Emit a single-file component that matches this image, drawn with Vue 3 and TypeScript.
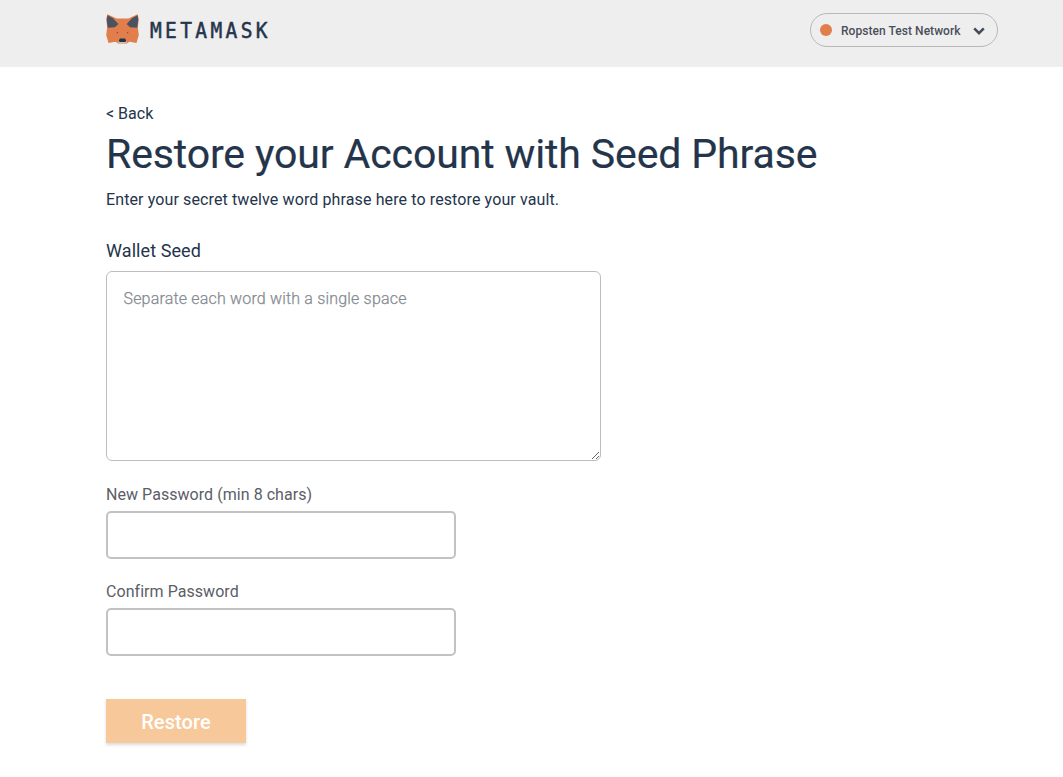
<script setup lang="ts">
import { ref } from 'vue'

const network = ref<string>('Ropsten Test Network')
const seed = ref<string>('')
const password = ref<string>('')
const confirmation = ref<string>('')
</script>

<template>
  <div class="page">
    <header class="header">
      <div class="brand">
        <svg class="fox" viewBox="0 0 33 31" width="33" height="31" aria-hidden="true">
          <path fill="#e27d4c" d="M1.4 .3 10.5 4.6H22.5L31.6 .3 32.8 5 31.8 13.5 32.8 21 30.5 29 23.5 27.8 20 30H13L9.5 27.8 2.5 29 .2 21 1.2 13.5 .2 5Z" />
          <path fill="#4a5361" d="M1.5 1.3 7 4.2 12.4 10 9 13.2 1.8 13.8 .8 6ZM31.5 1.3 26 4.2 20.6 10 24 13.2 31.2 13.8 32.2 6Z" />
          <path fill="#d9b9a2" d="M12.5 26.4H20.5L20.8 30H12.2Z" />
          <path fill="#24344b" d="M14 24.6H19L20.2 26.5 19.5 28H13.5L12.8 26.5Z" />
          <path fill="#684c43" d="M10.3 17.8 12.2 18.2 11.5 19.6ZM22.7 17.8 20.8 18.2 21.5 19.6Z" />
        </svg>
        <span class="wordmark">METAMASK</span>
      </div>
      <button class="network" type="button">
        <span class="dot"></span>
        <span class="network-name">{{ network }}</span>
        <svg class="chevron" viewBox="0 0 12 8" width="12" height="8" aria-hidden="true">
          <path d="M1.2 1.4 6 6.1 10.8 1.4" fill="none" stroke="#444c59" stroke-width="2.6" />
        </svg>
      </button>
    </header>
    <main class="content">
      <a class="back">&lt; Back</a>
      <h1 class="title">Restore your Account with Seed Phrase</h1>
      <p class="intro">Enter your secret twelve word phrase here to restore your vault.</p>
      <label class="seed-label" for="seed">Wallet Seed</label>
      <textarea id="seed" v-model="seed" class="seed" placeholder="Separate each word with a single space"></textarea>
      <label class="label new-label" for="password">New Password (min 8 chars)</label>
      <input id="password" v-model="password" class="field" type="password" />
      <label class="label confirm-label" for="confirm">Confirm Password</label>
      <input id="confirm" v-model="confirmation" class="field" type="password" />
      <button class="restore" type="button">Restore</button>
    </main>
  </div>
</template>

<style>
body {
  background: #fff;
}
</style>

<style scoped>
.page {
  height: 777px;
  overflow: hidden;
  background: #fff;
  color: #24344b;
  font-family: Roboto, "Liberation Sans", sans-serif;
}
.header {
  box-sizing: border-box;
  height: 67px;
  padding: 13px 65px 0 106px;
  display: flex;
  justify-content: space-between;
  align-items: flex-start;
  background: #eee;
}
.brand {
  display: flex;
  align-items: flex-start;
}
.fox {
  margin-top: 1px;
}
.wordmark {
  margin: 6px 0 0 11px;
  font: 400 21px/25px "DejaVu Sans Mono", monospace;
  letter-spacing: 3.6px;
  transform: scaleX(0.93);
  transform-origin: left;
  -webkit-text-stroke: 0.5px #24344b;
}
.network {
  box-sizing: border-box;
  width: 188px;
  height: 34px;
  padding: 0 12px 0 9px;
  display: flex;
  align-items: center;
  border: 1.5px solid #b8b8b8;
  border-radius: 17px;
  background: transparent;
  color: #4a4f5a;
  font: 500 12px/16px Roboto, sans-serif;
}
.dot {
  width: 12px;
  height: 12px;
  margin-right: 9px;
  border-radius: 50%;
  background: #e27d4c;
}
.network-name {
  padding-top: 1px;
  white-space: nowrap;
  letter-spacing: 0.05px;
}
.chevron {
  margin-top: 1px;
  margin-left: auto;
}
.content {
  padding: 37px 0 0 106px;
  display: flex;
  flex-direction: column;
  align-items: flex-start;
}
.back {
  font-size: 16px;
  line-height: 20px;
}
.title {
  margin: 5px 0 0;
  font-size: 41px;
  font-weight: 400;
  line-height: 50px;
  letter-spacing: -0.12px;
  white-space: nowrap;
  -webkit-text-stroke: 0.2px #24344b;
}
.intro {
  margin: 11px 0 0;
  font-size: 16px;
  line-height: 20px;
  letter-spacing: 0.115px;
}
.seed-label {
  margin-top: 30px;
  font-size: 18px;
  line-height: 22px;
  letter-spacing: 0.08px;
}
.seed {
  box-sizing: border-box;
  width: 495px;
  height: 190px;
  margin: 9px 0 0;
  padding: 17px 16.5px;
  border: 1px solid #bdbdbd;
  border-radius: 6px;
  outline: none;
  background: #fff;
  font: 300 16px/20px Roboto, sans-serif;
  letter-spacing: 0.18px;
}
.seed::placeholder {
  color: #858a90;
  -webkit-text-stroke: 0.25px #858a90;
}
.label {
  color: #5b5d67;
  font-size: 16px;
  line-height: 20px;
  letter-spacing: 0.05px;
}
.new-label {
  margin-top: 24px;
}
.confirm-label {
  margin-top: 23px;
}
.field {
  box-sizing: border-box;
  width: 350px;
  height: 48px;
  margin: 6px 0 0;
  padding: 0 14px;
  border: 2px solid #c2c2c2;
  border-radius: 5px;
  outline: none;
  background: #fff;
}
.restore {
  box-sizing: border-box;
  width: 140px;
  height: 44px;
  margin: 43px 0 0;
  padding: 2px 0 0;
  border: 0;
  background: #f7c899;
  box-shadow: 0 2px 3px rgba(0, 0, 0, 0.14);
  color: #fff;
  font: 500 20px/42px Roboto, sans-serif;
  letter-spacing: 0.1px;
}
</style>
